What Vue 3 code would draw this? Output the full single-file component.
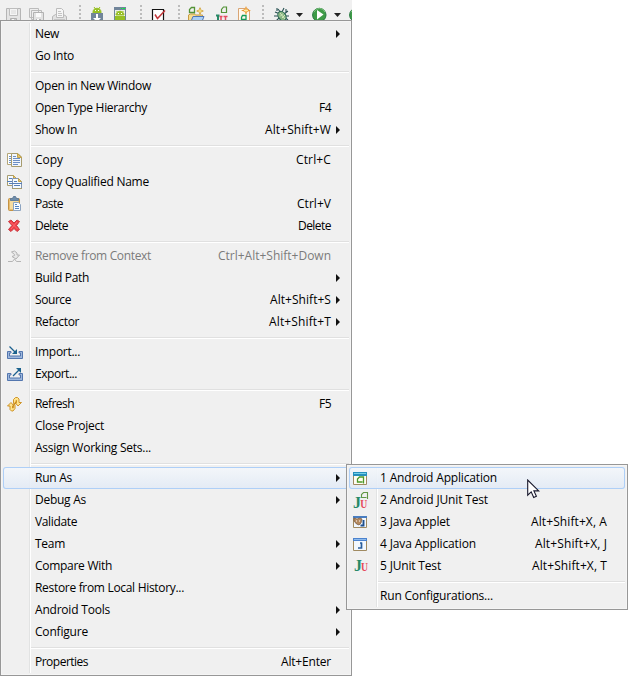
<script setup>
const icons = {
  save: '<path d="M.5 1.500h14v14h-12l-2-2z" fill="#e4e4e4" stroke="#b5b5b5"/><path d="M3.500 1.500h8v7h-8z" fill="#f5f5f5" stroke="#bdbdbd"/><path d="M5 4h5M5 6h5" stroke="#d8d8d8"/><path d="M4.500 11.500h6v4h-6z" fill="#ccc" stroke="#b0b0b0"/><path d="M6 12h2v3H6z" fill="#f8f8f8"/>',
  saveall: '<path d="M.5 1.500h9v9h-9zM2.500 3.500h10v9h-10z" fill="#eee" stroke="#bbb"/><path d="M4.500 5.500h10v11h-10z" fill="#e2e2e2" stroke="#b2b2b2"/><path d="M7 6h5v4H7z" fill="#fafafa"/><path d="M7 12h5v4H7z" fill="#b5b5b5"/><path d="M8 12h2v2H8z" fill="#fff"/>',
  print: '<path d="M.5 14.500v-5l3-2h8l3 2v5z" fill="#e2e2e2" stroke="#b7b7b7"/><path d="M4.500 10.500v-9h5l2 2v7z" fill="#f6f6f6" stroke="#bbb"/><path d="M6 4.500h3M6 6.500h4M6 8.500h4" stroke="#c4c4c4"/><path d="M2 12.500h11" stroke="#c6c6c6"/>',
  sdk: '<path d="M2 5c0-5 8-5 8 0v1H2zM3 0l1.500 2M9 0L7.500 2" fill="#97c024" stroke="#97c024"/><path d="M4 3h1v1H4zM7 3h1v1H7z" fill="#fff"/><path d="M0 6h12v9H0z" fill="#71859a"/><path d="M5 7h2v4h3l-4 4-4-4h3z" fill="#fff"/>',
  avd: '<path d="M0 0h12v15H0z" fill="#71859a"/><path d="M1 3h10v10H1z" fill="#eef2e8"/><path d="M7 1h1v1H7zM9 1h2v1H9z" fill="#0f3"/><path d="M2 8c0-5 8-5 8 0zM2.500 4l1 1M9.500 4l-1 1" fill="#97c024" stroke="#97c024"/><path d="M4 6h1v1H4zM7 6h1v1H7z" fill="#fff"/><path d="M1 9h10v4H1z" fill="#97c024"/>',
  check: '<path d="M.5 2.500h11v12H.5z" fill="#fff" stroke="#111" stroke-width="1.200"/><path d="M3 7.500l2.500 4L13 3.500" fill="none" stroke="#c2383b" stroke-width="1.500"/>',
  newproj: '<path d="M.5 15V8l2-1h4l1 1h7v7z" fill="#f7db8e" stroke="#c69b43"/><path d="M3 14.500l2-5h11l-2 5z" fill="#a9cff6" stroke="#4f76b8"/><path d="M6.500 5.500h-5v-3l2-2h3v6" fill="none" stroke="#539337" stroke-width="1.300"/><path d="M12 0l1.300 2.700L16 4l-2.700 1.300L12 8l-1.300-2.700L8 4l2.700-1.300z" fill="#c99525"/><path d="M12 2v4M10 4h4" stroke="#fff0a0"/>',
  newtest: '<path d="M3 8.500h3.500M5 8v7H1" fill="none" stroke="#278967" stroke-width="2"/><path d="M6.500 9.500h3M10.500 9.500h4M8 10v5M12.500 10v5" stroke="#e34d60" stroke-width="1.500"/><path d="M13.500 5.500h-5v-3l2-2.500h3v6" fill="none" stroke="#539337" stroke-width="1.200"/>',
  newxml: '<path d="M.5 1.500h9l2 2v12h-11z" fill="#fff9ee" stroke="#d9a575"/><path d="M7.500 12.500h-4v-2l1-2h3.500v7H4" fill="none" stroke="#159c58" stroke-width="1.300"/><path d="M8 -1l1.300 3.200L13 3.500l-3.700 1.300L8 8 6.700 4.800 3 3.500l3.700-1.300z" fill="#e99531"/><path d="M8 1.500v4M6 3.500h4" stroke="#fff0a0"/>',
  debug: '<path d="M4 2l3 4M10 1L8 5M1 5l5 2M0 9h5M2 14l4-4M14 4l-4 3M15 9h-4M14 13l-4-3M3 1v3M12 2v3" stroke="#264f50" stroke-width="1.100"/><ellipse cx="8" cy="9" rx="3.700" ry="5" transform="rotate(-35 8 9)" fill="#86b482" stroke="#286653"/><path d="M6 6l5 6M6 9.500l3-3M8 11l3-3" stroke="#d4e9bb"/>',
  run: '<circle cx="7.300" cy="8" r="6.700" fill="#3e9b47" stroke="#25773d"/><path d="M2 5a6 6 0 0111 0" fill="none" stroke="#83c783"/><path d="M5 3l6.500 4.500L5 12.500z" fill="#fff"/>',
  copy: '<path d="M.5 1.500h8v11h-8z" fill="#fff" stroke="#b3a678"/><path d="M2 4.500h3M2 6.500h3M2 8.500h3M2 10.500h3" stroke="#6c91c7"/><path d="M4.500 1.500h6.500l3.500 3.500v9.500h-10z" fill="#f1f6fd" stroke="#a79c6e"/><path d="M10.500 1.500v4h4z" fill="#e7c76d" stroke="#c2a34c"/><path d="M6 4.500h3M6 6.500h7M6 8.500h7M6 10.500h7M6 12.500h5" stroke="#6c8fc4"/>',
  copyname: '<path d="M.5 11.500v-10h6l3 3v7z" fill="#f5faff" stroke="#a79c6e"/><path d="M6.500 1.500v3h3z" fill="#e7c76d" stroke="#c2a34c"/><path d="M2 4.500h3M0 7.500h6M2 9.500h4" stroke="#587fb8"/><path d="M5.500 4.500h6l3 3v7h-9z" fill="#f5faff" stroke="#8396b0"/><path d="M11.500 4.500v3h3z" fill="#e7c76d" stroke="#bca152"/><path d="M7 7.500h3M5 9.500h10M7 11.500h6" stroke="#587fb8"/><path d="M5 14.500h10" stroke="#a79c6e"/>',
  paste: '<rect x="1.500" y="2.500" width="11" height="12" rx="1" fill="#e7bd70" stroke="#c49243"/><path d="M3 5h8v8H3z" fill="#f7dca0"/><path d="M3.500 4.500v-2h2l1-2h2l1 2h2v2z" fill="#6d8cab" stroke="#617c99"/><path d="M6.500 6.500h5l2 2v6h-7z" fill="#f8fbff" stroke="#8da4c0"/><path d="M8 8.500h2M8 10.500h4M8 12.500h4" stroke="#5686c2"/>',
  del: '<path d="M1.500 3.500L4 2l3 3L10 2l2.500 1.500-3 4 3 4-2.500 2-3-3-3 3-2.500-2 3.500-4z" fill="#ef3e47" stroke="#c83a40"/><path d="M3.500 4l7 7M10 4l-6 7" stroke="#ff6970"/>',
  remove: '<path d="M1 13.500h4.500l2-2.500 2 2.500H14" stroke="#b5b5b5" fill="none"/><path d="M4.500 4l3-1 2.500 2v2l2.500 0-3.500 4-4-2.500 2.500-1V6.500z" fill="#e8e8e8" stroke="#b2b2b2"/>',
  import: '<path d="M4 7.500H.5v7h15v-7H12v1.500h1.500v3h-11V9H4z" fill="#9eb8dd" stroke="#5376ae"/><path d="M2.500 2.500l6 6" stroke="#1b608e" stroke-width="1.200"/><path d="M10 5v5H5z" fill="#1c638e"/>',
  export: '<path d="M4 7.500H.5v7h15v-7H12v1.500h1.500v3h-11V9H4z" fill="#9eb8dd" stroke="#5376ae"/><path d="M6 10l6-6" stroke="#1b608e" stroke-width="1.200"/><path d="M9 2h5v5z" fill="#1c638e"/>',
  refresh: '<path d="M6.500 7.500V3.500l2-2h2l1.500 1.500v3.500h2.500l-3.500 3.500-3-3.500h1.500V4.500H9v3zM8 8.500v4l-2 2.500H4.500L3 13.500V10H.5L4 6.500 7 10H5.500v2h.800V8.500z" fill="#ffe48c" stroke="#c98a18" stroke-width=".9"/>',
  androidapp: '<path d="M.5 2.500h13v12H.5z" fill="#fffdf2" stroke="#a08a61"/><path d="M0 2h14v4H0z" fill="#2790bd"/><path d="M1 3.500h12" stroke="#76d0e8"/><path d="M9.500 12H4.500V9l2-2h4v6.500" fill="none" stroke="#4d9828" stroke-width="1.300"/>',
  androidtest: '<text x="0" y="16" font-family="Liberation Serif" font-size="16" font-weight="bold" fill="#278967">J</text><text x="7.300" y="16" textLength="7" lengthAdjust="spacingAndGlyphs" font-family="Liberation Serif" font-size="12" font-weight="bold" fill="#e64758">U</text><path d="M13.500 5.500h-5v-3L10.500.5h4v6.500" fill="none" stroke="#639746" stroke-width="1.100"/>',
  applet: '<path d="M.5 2.500h13v11H.5z" fill="#f2f8ff" stroke="#a08a61"/><path d="M0 2h14v2H0z" fill="#497dc0"/><path d="M1 4l3 1 3-1 2 1-1 4-2 2-2.500-1L1 7z" fill="#b58a60" stroke="#72533b" stroke-width=".7"/><path d="M3 7h1M6 7h1" stroke="#fff"/><path d="M10.500 6v5.500H7.500" fill="none" stroke="#1e4f8e" stroke-width="1.900"/>',
  javaapp: '<path d="M.5 2.500h13v12H.5z" fill="#f2f8ff" stroke="#a08a61"/><path d="M0 2h14v3H0z" fill="#4c82cd"/><path d="M1 3.500h12" stroke="#8ebbed"/><path d="M8.500 6.500v5.500H5M7 7h2" fill="none" stroke="#285d9d" stroke-width="1.700"/>',
  junit: '<text x="1" y="13" font-family="Liberation Serif" font-size="16" font-weight="bold" fill="#278967">J</text><text x="8" y="13" textLength="7" lengthAdjust="spacingAndGlyphs" font-family="Liberation Serif" font-size="11.500" font-weight="bold" fill="#e64758">U</text>',
}

const item = (label, w, o = {}) => ({ label, w, ...o })
const sub = { arrow: true }
const sep = { sep: true }
const key = (k, kw, o = {}) => ({ key: k, kw, ...o })

const menu = [
  item('New', 24, sub), item('Go Into', 39), sep,
  item('Open in New Window', 116), item('Open Type Hierarchy', 112, key('F4', 12)),
  item('Show In', 42, key('Alt+Shift+W', 66, sub)), sep,
  item('Copy', 28, key('Ctrl+C', 35, { icon: 'copy' })),
  item('Copy Qualified Name', 114, { icon: 'copyname' }),
  item('Paste', 28, key('Ctrl+V', 34, { icon: 'paste' })),
  item('Delete', 33, key('Delete', 33, { icon: 'del' })), sep,
  item('Remove from Context', 116, key('Ctrl+Alt+Shift+Down', 113, { icon: 'remove', disabled: true })),
  item('Build Path', 54, sub), item('Source', 36, key('Alt+Shift+S', 61, sub)),
  item('Refactor', 44, key('Alt+Shift+T', 62, sub)), sep,
  item('Import...', 45, { icon: 'import' }), item('Export...', 42, { icon: 'export' }), sep,
  item('Refresh', 39, key('F5', 12, { icon: 'refresh' })), item('Close Project', 69),
  item('Assign Working Sets...', 116), sep,
  item('Run As', 37, { arrow: true, active: true }), item('Debug As', 51, sub), item('Validate', 42),
  item('Team', 30, sub), item('Compare With', 77, sub), item('Restore from Local History...', 149),
  item('Android Tools', 75, sub), item('Configure', 53, sub), sep,
  item('Properties', 53, key('Alt+Enter', 50)),
]
const runAs = [
  item('1 Android Application', 117, { icon: 'androidapp', active: true }),
  item('2 Android JUnit Test', 108, { icon: 'androidtest' }),
  item('3 Java Applet', 70, key('Alt+Shift+X, A', 76, { icon: 'applet' })),
  item('4 Java Application', 96, key('Alt+Shift+X, J', 72, { icon: 'javaapp' })),
  item('5 JUnit Test', 61, key('Alt+Shift+X, T', 75, { icon: 'junit' })), sep,
  item('Run Configurations...', 113),
]
const menus = [{ name: 'context', items: menu }, { name: 'submenu', items: runAs }]

// gap is the space before each tool, w its width
const tools = [
  { icon: 'save', gap: 6, w: 16 }, { icon: 'saveall', gap: 7, w: 16 }, { icon: 'print', gap: 7, w: 16 },
  { grip: true, gap: 11, w: 2 }, { icon: 'sdk', gap: 10, w: 16 }, { icon: 'avd', gap: 7, w: 16 },
  { grip: true, gap: 10, w: 2 }, { icon: 'check', gap: 10, w: 16 }, { grip: true, gap: 10, w: 2 },
  { icon: 'newproj', gap: 8, w: 16 }, { icon: 'newtest', gap: 9, w: 16 }, { icon: 'newxml', gap: 9, w: 16 },
  { grip: true, gap: 8, w: 2 }, { icon: 'debug', gap: 10, w: 16 }, { drop: true, gap: 6, w: 7 },
  { icon: 'run', gap: 9, w: 16 }, { drop: true, gap: 6, w: 7 }, { icon: 'run', gap: 8, w: 16 },
]

const vFit = {
  mounted(el, { value }) {
    const natural = el.getBoundingClientRect().width
    el.style.letterSpacing = (value - natural) / el.textContent.length + 'px'
  },
}
</script>

<template>
  <div class="screen">
    <div class="toolbar">
      <span v-for="(t, i) in tools" :key="i" class="tool" :style="{ marginLeft: t.gap + 'px', width: t.w + 'px' }">
        <svg v-if="t.icon" class="icon" viewBox="0 0 16 16" v-html="icons[t.icon]" />
        <svg v-else-if="t.drop" class="drop" viewBox="0 0 7 4"><path d="M0 0h7L3.500 4z" fill="#222" /></svg>
        <span v-else class="grip"><i v-for="n in 4" :key="n" /></span>
      </span>
    </div>
    <div v-for="m in menus" :key="m.name" class="menu" :class="m.name">
      <template v-for="(it, i) in m.items" :key="i">
        <div v-if="it.sep" class="sep"><span class="rule" /></div>
        <div v-else class="row" :class="{ active: it.active, disabled: it.disabled }">
          <span class="slot"><svg v-if="it.icon" class="icon" viewBox="0 0 16 16" v-html="icons[it.icon]" /></span>
          <span class="label"><span v-fit="it.w" class="text">{{ it.label }}</span></span>
          <span v-if="it.key" v-fit="it.kw" class="text">{{ it.key }}</span>
          <span class="end"><svg v-if="it.arrow" class="arrow" viewBox="0 0 4 8"><path d="M0 0l4 4-4 4z" fill="#111" /></svg></span>
        </div>
      </template>
    </div>
    <svg class="cursor" viewBox="0 0 13 20">
      <path d="M.7 1v15.200l3.500-3.300 2.500 5.600 2.700-1.200-2.500-5.400h4.800z" fill="#fff" stroke="#17172b" stroke-width="1.100" />
    </svg>
  </div>
</template>

<style>
body { background: #fff; overflow: hidden; }
</style>
<style scoped>
.screen { position: relative; width: 628px; height: 676px; overflow: hidden; font: 12px/22px "Open Sans", "Noto Sans", sans-serif; color: #000; }
.toolbar { display: flex; width: 352px; height: 20px; overflow: hidden; background: #f0f0f0; }
.tool { flex: none; display: block; }
.icon { display: block; width: 16px; height: 16px; overflow: visible; }
.toolbar .icon { margin-top: 7px; }
.drop { display: block; width: 7px; height: 4px; margin-top: 13px; }
.grip { display: flex; flex-direction: column; gap: 2px; padding-top: 5px; }
.grip i { width: 2px; height: 2px; background: #bcbcbc; }
.menu { box-sizing: border-box; border: 1px solid #979797; padding: 2px; background: linear-gradient(90deg, transparent 26px, #e2e3e3 26px, #e2e3e3 27px, #fff 27px, #fff 28px, transparent 28px) content-box, #f0f0f0; box-shadow: inset 0 0 0 1px #f5f5f5; }
.context { width: 352px; height: 656px; }
.submenu { position: absolute; left: 346px; top: 464px; width: 282px; height: 146px; }
.submenu { background: linear-gradient(90deg, transparent 27px, #e2e3e3 27px, #e2e3e3 28px, #fff 28px, #fff 29px, transparent 29px) content-box, #f0f0f0; }
.row { box-sizing: border-box; display: flex; align-items: center; height: 22px; padding-left: 4px; border-radius: 3px; }
.active { background: linear-gradient(rgba(244, 247, 251, .9), rgba(226, 234, 245, .9)); box-shadow: inset 0 0 0 1px #aecff7; }
.disabled { color: #7b7b7b; }
.slot { flex: none; width: 28px; }
.submenu .slot { width: 27px; }
.label { flex: 1; }
.text { display: inline-block; white-space: pre; height: 22px; line-height: 21px; }
.end { width: 18px; padding-left: 5px; box-sizing: border-box; }
.arrow { display: block; width: 4px; height: 8px; }
.sep { height: 8px; padding: 4px 0 0 28px; box-sizing: border-box; }
.submenu .sep { padding-left: 29px; }
.rule { display: block; height: 1px; background: #e0e0e0; border-bottom: 1px solid #fff; }
.cursor { position: absolute; left: 527px; top: 479px; width: 13px; height: 20px; }
</style>
